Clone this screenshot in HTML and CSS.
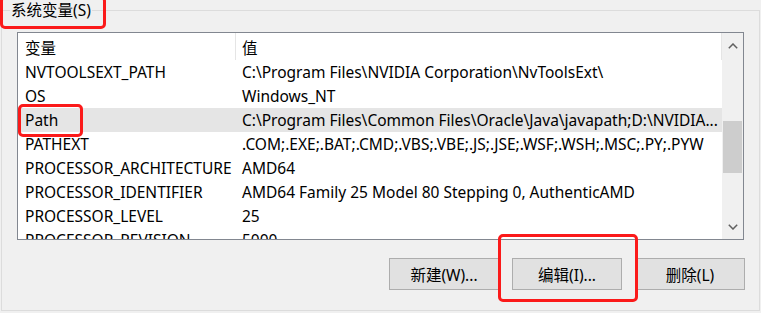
FILE: index.html
```html
<!DOCTYPE html>
<html lang="zh-CN">
<head>
    <meta charset="UTF-8">
    <title>系统变量</title>
    <link rel="stylesheet" href="styles.css">
</head>
<body>

    <fieldset class="Group">
        <legend class="Group__title">系统变量(S)</legend>

        <div class="List">
            <div class="List__body">
                <div class="List__head">
                    <div class="List__col List__col--name">变量</div>
                    <div class="List__col List__col--value">值</div>
                </div>

                <div class="List__row">
                    <div class="List__col List__col--name">NVTOOLSEXT_PATH</div>
                    <div class="List__col List__col--value">C:\Program Files\NVIDIA Corporation\NvToolsExt\</div>
                </div>
                <div class="List__row">
                    <div class="List__col List__col--name">OS</div>
                    <div class="List__col List__col--value">Windows_NT</div>
                </div>
                <div class="List__row List__row--selected">
                    <div class="List__col List__col--name">Path</div>
                    <div class="List__col List__col--value">C:\Program Files\Common Files\Oracle\Java\javapath;D:\NVIDIA...</div>
                </div>
                <div class="List__row">
                    <div class="List__col List__col--name">PATHEXT</div>
                    <div class="List__col List__col--value">.COM;.EXE;.BAT;.CMD;.VBS;.VBE;.JS;.JSE;.WSF;.WSH;.MSC;.PY;.PYW</div>
                </div>
                <div class="List__row">
                    <div class="List__col List__col--name">PROCESSOR_ARCHITECTURE</div>
                    <div class="List__col List__col--value">AMD64</div>
                </div>
                <div class="List__row">
                    <div class="List__col List__col--name">PROCESSOR_IDENTIFIER</div>
                    <div class="List__col List__col--value">AMD64 Family 25 Model 80 Stepping 0, AuthenticAMD</div>
                </div>
                <div class="List__row">
                    <div class="List__col List__col--name">PROCESSOR_LEVEL</div>
                    <div class="List__col List__col--value">25</div>
                </div>
                <div class="List__row">
                    <div class="List__col List__col--name">PROCESSOR_REVISION</div>
                    <div class="List__col List__col--value">5000</div>
                </div>
            </div>

            <!-- вертикальная полоса прокрутки -->
            <div class="Scroll">
                <div class="Scroll__arrow">
                    <svg width="10" height="6" viewBox="0 0 10 6"><polyline points="0.8,5.2 5,1 9.2,5.2" fill="none" stroke="#606060" stroke-width="1.5"/></svg>
                </div>
                <div class="Scroll__track">
                    <div class="Scroll__thumb"></div>
                </div>
                <div class="Scroll__arrow">
                    <svg width="10" height="6" viewBox="0 0 10 6"><polyline points="0.8,0.8 5,5 9.2,0.8" fill="none" stroke="#606060" stroke-width="1.5"/></svg>
                </div>
            </div>
        </div>

        <div class="Btns">
            <button>新建(W)...</button>
            <button>编辑(I)...</button>
            <button>删除(L)</button>
        </div>
    </fieldset>

    <!-- красные рамки-пометки поверх окна -->
    <div class="Mark Mark--title"></div>
    <div class="Mark Mark--path"></div>
    <div class="Mark Mark--edit"></div>

</body>
</html>
```

FILE: styles.css
```css
* {
    box-sizing: border-box;
}

body {
    margin: 0;
    width: 761px;
    height: 313px;
    overflow: hidden;
    position: relative;
    background: #f0f0f0;
    font-family: 'Noto Sans', 'Noto Sans CJK SC', sans-serif;
    font-size: 15.5px;
    color: #000;
}

.Group {
    margin: 0 1px;
    padding: 0 15px;
    height: 311px;
    border: 1px solid #dcdcdc;
    min-width: 0;
}

.Group__title {
    margin-left: -7px;
    padding: 0 1px;
    line-height: 20px;
}

.List {
    display: flex;
    margin-top: 12px;
    height: 208px;
    border: 1px solid #828790;
    background: #fff;
    overflow: hidden;
}

.List__body {
    flex: 1;
    min-width: 0;
}

.List__head {
    display: flex;
    height: 27px;
    align-items: center;
}

.List__head .List__col {
    height: 100%;
    display: flex;
    align-items: center;
    padding-top: 2px;
    border-right: 1px solid #e5e5e5;
}

.List__row {
    display: flex;
    height: 24px;
    align-items: center;
}

.List__row--selected {
    background: #e5e5e5;
}

.List__col {
    white-space: nowrap;
    overflow: hidden;
    text-overflow: ellipsis;
}

.List__col--name {
    width: 218px;
    padding-left: 7px;
}

.List__col--value {
    flex: 1;
    padding-left: 6px;
}

.Scroll {
    width: 21px;
    display: flex;
    flex-direction: column;
    background: #f0f0f0;
}

.Scroll__arrow {
    height: 25px;
    display: flex;
    align-items: center;
    justify-content: center;
}

.Scroll__track {
    flex: 1;
    padding-top: 63px;
}

.Scroll__thumb {
    width: 19px;
    height: 52px;
    margin-left: 1px;
    background: #cdcdcd;
}

.Btns {
    display: flex;
    justify-content: flex-end;
    gap: 13px;
    margin-top: 18px;
    margin-right: -1px;
}

.Btns button {
    width: 110px;
    height: 32px;
    border: 1px solid #adadad;
    background: #e1e1e1;
    font-family: 'Noto Sans', 'Noto Sans CJK SC', sans-serif;
    font-size: 15.5px;
    color: #000;
    padding: 0;
}

.Mark {
    position: absolute;
    border: 3px solid #fb1a1a;
    border-radius: 5px;
}

.Mark--title {
    left: 0;
    top: -4px;
    width: 106px;
    height: 33px;
}

.Mark--path {
    left: 18px;
    top: 104px;
    width: 65px;
    height: 33px;
}

.Mark--edit {
    left: 498px;
    top: 234px;
    width: 140px;
    height: 68px;
}
```
